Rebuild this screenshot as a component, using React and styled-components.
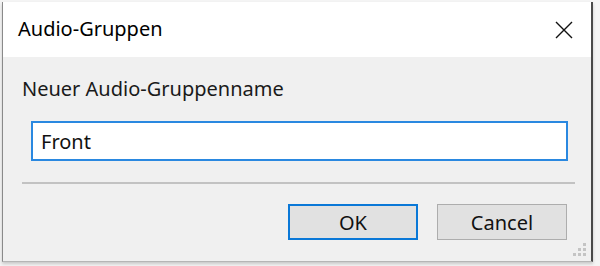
import styled, { createGlobalStyle } from 'styled-components';

const Global = createGlobalStyle`
    html, body {
        margin: 0;
        padding: 0;
        background: #f4f4f4;
    }
    body {
        font-family: "Noto Sans", "Open Sans", sans-serif;
    }
`

export default function App() {
    return (
        <Page>
            <Global />
            <Dialog>
                <TitleBar>
                    <Title>Audio-Gruppen</Title>
                    <CloseButton aria-label="Close">
                        <svg width="18" height="18" viewBox="0 0 18 18">
                            <path d="M1 1 L17 17 M17 1 L1 17" stroke="#111" strokeWidth="1.4" fill="none" />
                        </svg>
                    </CloseButton>
                </TitleBar>
                <Body>
                    <Label>Neuer Audio-Gruppenname</Label>
                    <Input defaultValue="Front" />
                    <Separator />
                    <Buttons>
                        <Button primary>OK</Button>
                        <Button>Cancel</Button>
                    </Buttons>
                    <Grip>
                        <svg width="14" height="14" viewBox="0 0 14 14">
                            {[[10, 0], [10, 5], [5, 5], [10, 10], [5, 10], [0, 10]].map(([x, y], i) => (
                                <rect key={i} x={x} y={y} width="3" height="3" fill="#c4c4c4" />
                            ))}
                        </svg>
                    </Grip>
                </Body>
            </Dialog>
        </Page>
    )
}

const Page = styled.div`
    width: 600px;
    height: 266px;
    padding: 2px 0 0 2px;
    box-sizing: border-box;
    overflow: hidden;
`

const Dialog = styled.div`
    width: 591px;
    height: 260px;
    display: flex;
    flex-direction: column;
    border-left: 1px solid #8a8a8a;
    border-right: 2px solid #4a4a4a;
    border-bottom: 1px solid #b5b5b5;
    box-shadow: 0 2px 3px rgba(0, 0, 0, 0.18);
    box-sizing: border-box;
    background: #f0f0f0;
`

const TitleBar = styled.div`
    height: 55px;
    background: #fff;
    display: flex;
    align-items: center;
    justify-content: space-between;
    padding: 0 16px 0 15px;
    flex-shrink: 0;
`

const Title = styled.div`
    font-size: 20px;
    color: #000;
    margin-top: -3px;
`

const CloseButton = styled.div`
    width: 18px;
    height: 18px;
    display: flex;
    margin-right: 2px;
`

const Body = styled.div`
    flex: 1;
    position: relative;
    display: flex;
    flex-direction: column;
    padding: 20px 18px 0 19px;
`

const Label = styled.div`
    font-size: 20px;
    color: #1a1a1a;
    line-height: 24px;
`

const Input = styled.input`
    margin: 20px 0 0 9px;
    width: 537px;
    height: 40px;
    box-sizing: border-box;
    border: 2px solid #2a88e0;
    background: #fff;
    font-family: inherit;
    font-size: 20px;
    color: #111;
    padding: 0 8px;
    outline: none;
`

const Separator = styled.div`
    margin-top: 21px;
    height: 2px;
    width: 553px;
    background: #c2c2c2;
`

const Buttons = styled.div`
    margin-top: 20px;
    display: flex;
    justify-content: flex-end;
    gap: 19px;
    padding-right: 6px;
`

const Button = styled.div`
    width: 130px;
    height: 36px;
    box-sizing: border-box;
    display: flex;
    align-items: center;
    justify-content: center;
    background: #e1e1e1;
    border: ${props => props.primary ? '2px solid #0a78d7' : '1.5px solid #adadad'};
    font-size: 20px;
    color: #111;
`

const Grip = styled.div`
    position: absolute;
    right: 4px;
    bottom: 4px;
    display: flex;
`
